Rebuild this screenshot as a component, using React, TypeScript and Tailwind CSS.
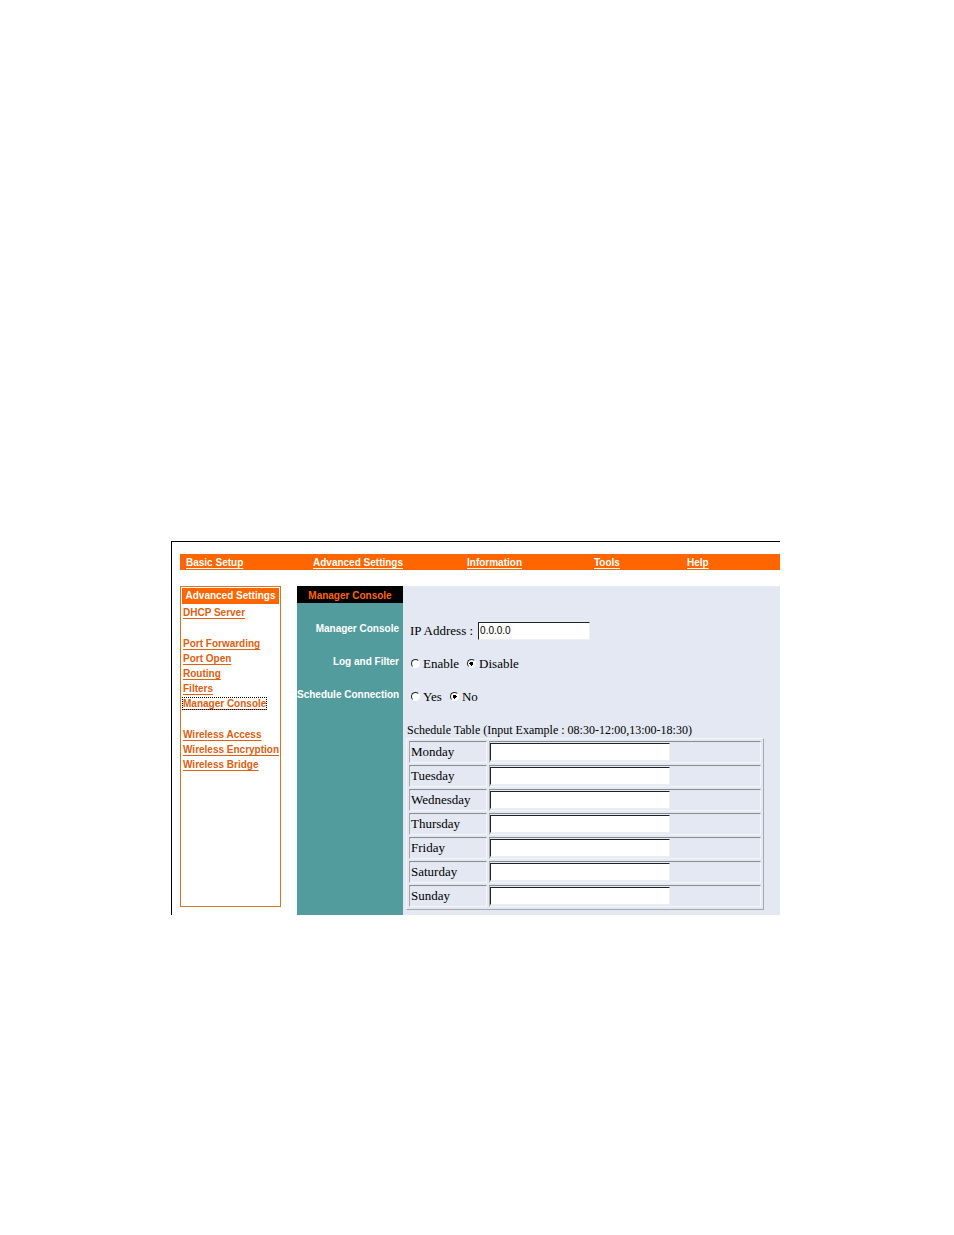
import React, { useState } from 'react';

interface NavLink {
  label: string;
  href: string;
}

const TOP_LINKS: NavLink[] = [
  { label: 'Basic Setup', href: '#basic' },
  { label: 'Advanced Settings', href: '#advanced' },
  { label: 'Information', href: '#information' },
  { label: 'Tools', href: '#tools' },
  { label: 'Help', href: '#help' },
];

// Each group is separated by a blank line in the side menu
const SIDE_GROUPS: NavLink[][] = [
  [{ label: 'DHCP Server', href: '#dhcp' }],
  [
    { label: 'Port Forwarding', href: '#forwarding' },
    { label: 'Port Open', href: '#open' },
    { label: 'Routing', href: '#routing' },
    { label: 'Filters', href: '#filters' },
    { label: 'Manager Console', href: '#console' },
  ],
  [
    { label: 'Wireless Access', href: '#access' },
    { label: 'Wireless Encryption', href: '#encryption' },
    { label: 'Wireless Bridge', href: '#bridge' },
  ],
];

const DAYS = ['Monday', 'Tuesday', 'Wednesday', 'Thursday', 'Friday', 'Saturday', 'Sunday'];

const inputClass =
  'h-[18px] border border-t-[#222222] border-l-[#222222] border-r-[#eeeeee] border-b-[#eeeeee] bg-white outline-none';

interface RadioPairProps {
  name: string;
  options: string[];
  value: string;
  onChange: (value: string) => void;
}

const RadioPair: React.FC<RadioPairProps> = ({ name, options, value, onChange }) => (
  <div className="flex items-center gap-2 pl-2" role="radiogroup" aria-labelledby={name}>
    {options.map((option) => (
      <label key={option} className="flex items-center gap-[3px]">
        <input
          type="radio"
          name={name}
          checked={value === option}
          onChange={() => onChange(option)}
          className="size-[9px] appearance-none rounded-full border border-t-[#222222] border-r-white border-b-white border-l-[#222222] bg-white checked:bg-[radial-gradient(circle,#000000_2px,#ffffff_2px)]"
        />
        {option}
      </label>
    ))}
  </div>
);

interface SettingRowProps {
  id: string;
  label: string;
  children: React.ReactNode;
}

const SettingRow: React.FC<SettingRowProps> = ({ id, label, children }) => (
  <div className="flex h-[33px]">
    <div
      id={id}
      className="w-[106px] shrink-0 bg-[#529c9e] pt-[9px] pr-1 text-right font-['Liberation_Sans',sans-serif] text-[10px] leading-4 font-bold whitespace-nowrap text-white"
    >
      {label}
    </div>
    <div className="flex flex-1 items-center pt-1">{children}</div>
  </div>
);

export default function App() {
  const [address, setAddress] = useState('0.0.0.0');
  const [logFilter, setLogFilter] = useState('Disable');
  const [schedule, setSchedule] = useState('No');
  const [times, setTimes] = useState<Record<string, string>>({});

  return (
    <div className="bg-white pt-[541px] pr-[174px] pl-[171px] font-['Liberation_Serif',serif] text-[13px] leading-4 text-black">
      <div className="border-t border-l border-black pt-3 pl-2">
        <nav className="grid h-4 grid-cols-[127fr_154fr_127fr_93fr_93fr] bg-[#ff6600] pl-1.5 font-['Liberation_Sans',sans-serif] text-[10px] leading-[18px] font-bold text-white">
          {TOP_LINKS.map((link) => (
            <a key={link.label} href={link.href} className="justify-self-start underline underline-offset-2">
              {link.label}
            </a>
          ))}
        </nav>

        <div className="mt-4 flex gap-4">
          <aside className="mb-2 w-[101px] shrink-0 border border-[#d9752b] p-px font-['Liberation_Sans',sans-serif] text-[10px] leading-[15px] font-bold whitespace-nowrap text-[#e0600f]">
            <h2 className="mb-px bg-[#ff6600] text-center leading-4 text-white">Advanced Settings</h2>
            <div className="flex flex-col gap-4 pl-px">
              {SIDE_GROUPS.map((group) => (
                <ul key={group[0].label}>
                  {group.map((link) => (
                    <li key={link.label}>
                      <a
                        href={link.href}
                        className={
                          link.href === '#console'
                            ? 'underline underline-offset-2 outline-1 outline-dotted outline-black'
                            : 'underline underline-offset-2'
                        }
                      >
                        {link.label}
                      </a>
                    </li>
                  ))}
                </ul>
              ))}
            </div>
          </aside>

          <main className="flex min-w-0 flex-1 flex-col bg-[#e3e8f2]">
            <div className="flex h-[26px]">
              <div className="w-[106px] shrink-0 bg-[#529c9e]">
                <h1 className="h-[17px] bg-black text-center font-['Liberation_Sans',sans-serif] text-[10px] leading-[19px] font-bold text-[#ff6600]">
                  Manager Console
                </h1>
              </div>
            </div>

            <SettingRow id="manager" label="Manager Console">
              <label className="flex items-center gap-[5px] pl-[7px]">
                IP Address :
                <input
                  type="text"
                  value={address}
                  onChange={(e) => setAddress(e.target.value)}
                  className={`${inputClass} w-28 pl-px font-['Liberation_Sans',sans-serif] text-[10px]`}
                />
              </label>
            </SettingRow>
            <SettingRow id="log" label="Log and Filter">
              <RadioPair name="log" options={['Enable', 'Disable']} value={logFilter} onChange={setLogFilter} />
            </SettingRow>
            <SettingRow id="schedule" label="Schedule Connection">
              <RadioPair name="schedule" options={['Yes', 'No']} value={schedule} onChange={setSchedule} />
            </SettingRow>

            <div className="flex flex-1">
              <div className="w-[106px] shrink-0 bg-[#529c9e]" />
              <div className="min-w-0 flex-1 pt-3 pr-4 pb-[5px] pl-[3px]">
                <table className="w-full border-separate border-spacing-x-0.5 border-spacing-y-0.5 border border-t-[#f4f7fa] border-r-[#a3a9ad] border-b-[#a3a9ad] border-l-[#f4f7fa]">
                  <caption className="pl-px text-left text-[12px] leading-[15px] whitespace-nowrap">
                    Schedule Table (Input Example : 08:30-12:00,13:00-18:30)
                  </caption>
                  <tbody>
                    {DAYS.map((day) => (
                      <tr key={day}>
                        <th
                          scope="row"
                          className="h-[22px] w-[78px] border border-t-[#858b8f] border-r-[#f4f7fa] border-b-[#f4f7fa] border-l-[#a3a9ad] pl-px text-left font-normal"
                        >
                          <label htmlFor={day}>{day}</label>
                        </th>
                        <td className="border border-t-[#858b8f] border-r-[#f4f7fa] border-b-[#f4f7fa] border-l-[#a3a9ad]">
                          <input
                            id={day}
                            type="text"
                            value={times[day] || ''}
                            onChange={(e) => setTimes({ ...times, [day]: e.target.value })}
                            className={`${inputClass} block w-[180px]`}
                          />
                        </td>
                      </tr>
                    ))}
                  </tbody>
                </table>
              </div>
            </div>
          </main>
        </div>
      </div>
    </div>
  );
}
